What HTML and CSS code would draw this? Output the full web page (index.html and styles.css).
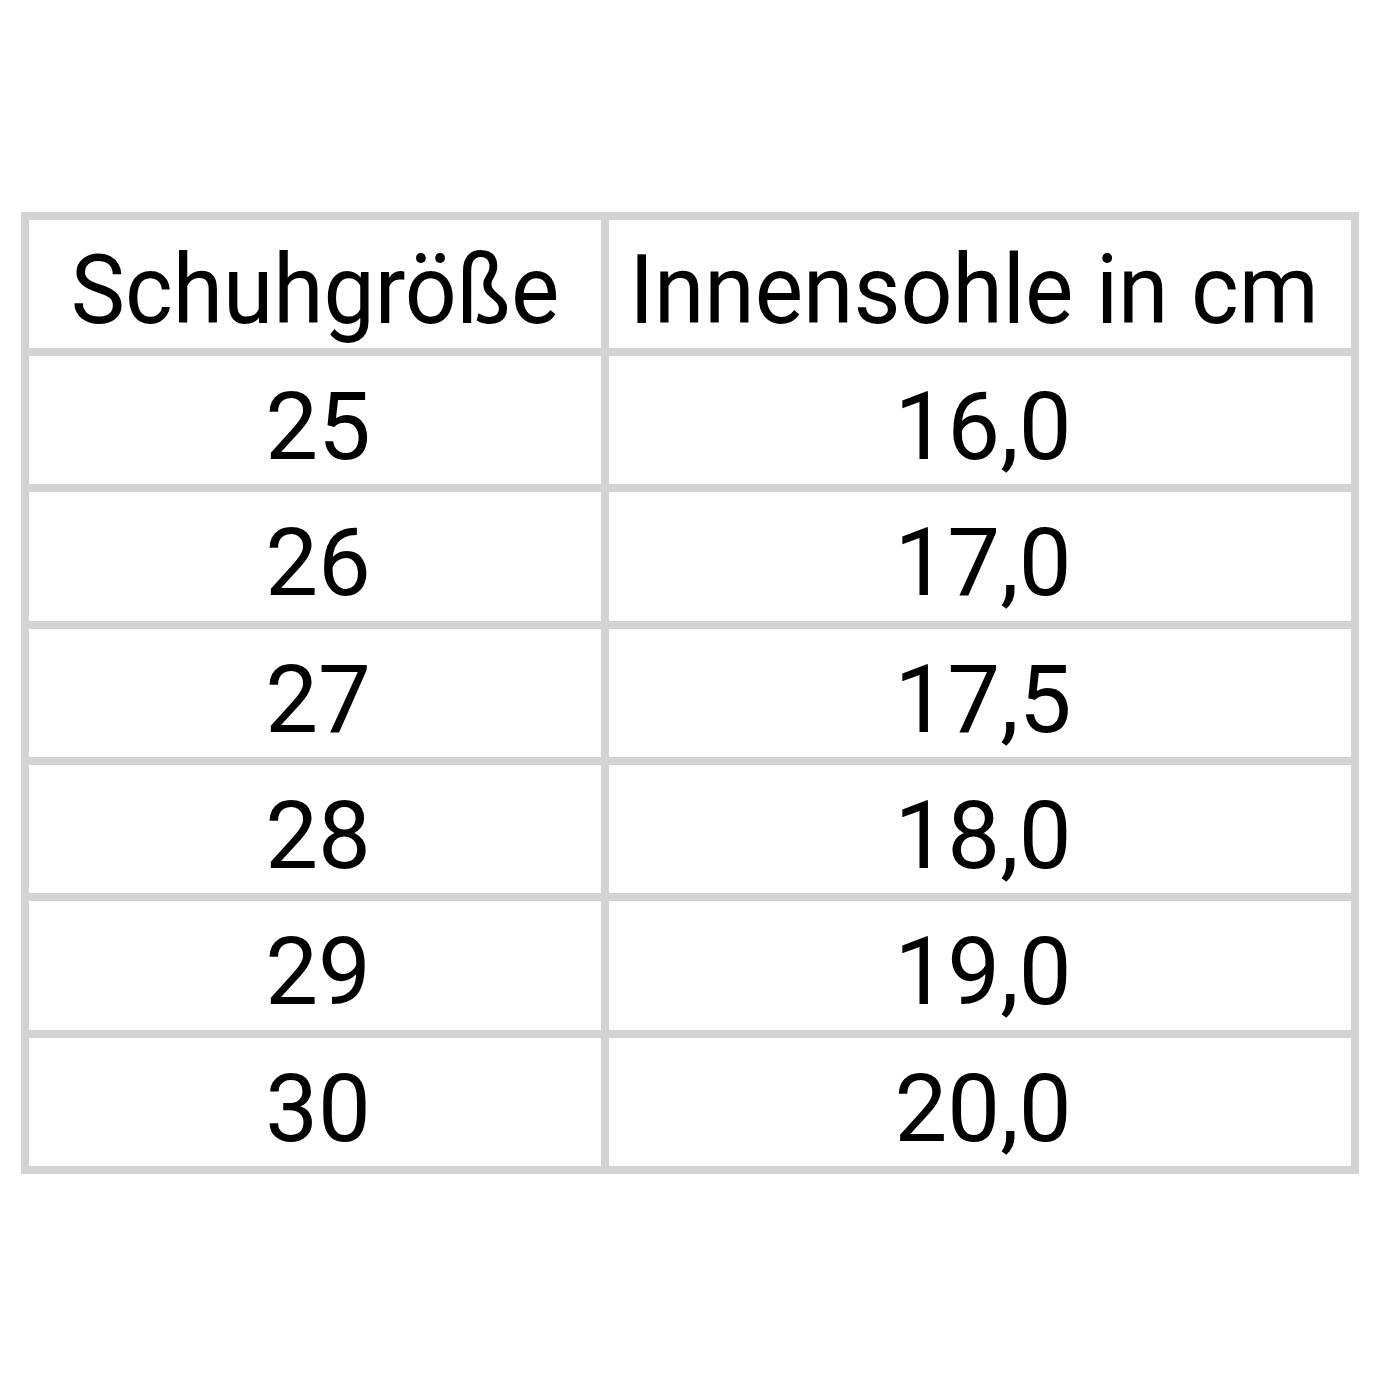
FILE: index.html
```html
<!DOCTYPE html>
<html lang="de">
<head>
<meta charset="utf-8">
<title>Größentabelle</title>
<link rel="stylesheet" href="styles.css">
</head>
<body>
<div class="page">
  <div class="size-table">
    <div class="cell head"><span class="cond">Schuhgröße</span></div>
    <div class="cell head head-wide"><span class="cond">Innensohle in cm</span></div>
    <div class="cell">25</div><div class="cell">16,0</div>
    <div class="cell">26</div><div class="cell">17,0</div>
    <div class="cell">27</div><div class="cell">17,5</div>
    <div class="cell">28</div><div class="cell">18,0</div>
    <div class="cell">29</div><div class="cell">19,0</div>
    <div class="cell">30</div><div class="cell">20,0</div>
  </div>
</div>
</body>
</html>
```
FILE: styles.css
```css
html, body {
  margin: 0;
  padding: 0;
  background: #ffffff;
}
.page {
  padding: 212px 0 0 21px;
}
.size-table {
  display: grid;
  grid-template-columns: 572px 742px;
  grid-template-rows: 128px 128px 129px 128px 128px 129px 128px;
  gap: 8px;
  padding: 8px;
  width: max-content;
  background: #d3d3d3;
  font-family: Roboto, "Liberation Sans", sans-serif;
  color: #000;
}
.cell {
  background: #ffffff;
  display: flex;
  align-items: center;
  justify-content: center;
  padding: 13px 0 0 6px;
  box-sizing: border-box;
  font-size: 94px;
  line-height: normal;
  white-space: nowrap;
}
.cell.head {
  font-size: 96px;
  padding: 12px 0 0 0;
}
.cell.head-wide {
  padding-right: 12px;
}
.cond {
  display: inline-block;
  transform: scaleX(0.95);
}
```
